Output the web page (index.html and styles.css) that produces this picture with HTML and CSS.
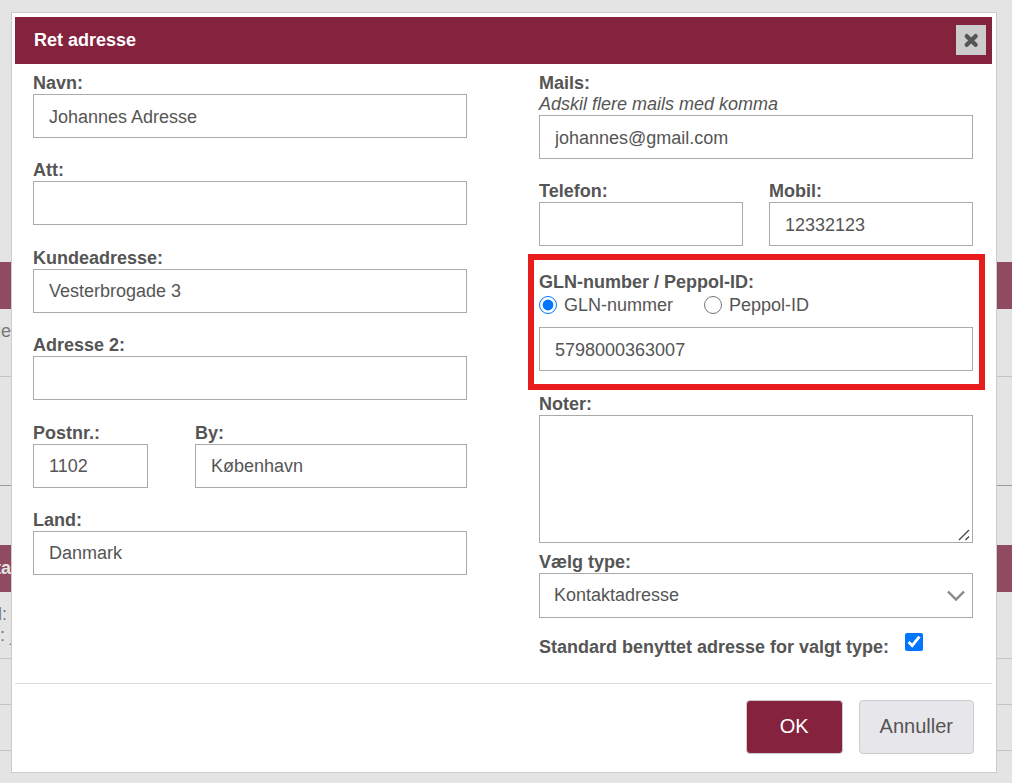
FILE: index.html
```
<!DOCTYPE html>
<html lang="da">
<head>
  <meta charset="UTF-8" />
  <meta name="viewport" content="width=device-width, initial-scale=1.0" />
  <title>Ret adresse</title>
  <link rel="stylesheet" href="styles.css">
</head>
<body>
  <!-- Page behind the dialog -->
  <div class="page" aria-hidden="true">
    <div class="page-top"></div>
    <div class="band"></div>
    <div class="page-row row-first"><span class="cell">ge</span></div>
    <div class="page-row row-dark"></div>
    <div class="page-space"></div>
    <div class="band"><span class="cell">ta</span></div>
    <div class="page-row row-contact">
      <span class="cell short">l:</span>
      <span class="cell long">s: j</span>
    </div>
    <div class="page-row row-small"></div>
    <div class="page-row row-small"></div>
  </div>

  <form class="dialog" role="dialog" aria-labelledby="dialog-title">
    <header class="dialog-header">
      <h1 id="dialog-title">Ret adresse</h1>
      <button type="button" class="close" aria-label="Luk">
        <svg width="16" height="16" viewBox="0 0 16 16">
          <path d="M3.8 4.2 L12.6 12.8 M12.6 4.2 L3.8 12.8" stroke="#555" stroke-width="4.4" stroke-linecap="round" />
        </svg>
      </button>
    </header>

    <div class="dialog-body">
      <div class="column column-address">
        <div class="field">
          <label for="navn">Navn:</label>
          <input type="text" id="navn" value="Johannes Adresse">
        </div>
        <div class="field">
          <label for="att">Att:</label>
          <input type="text" id="att">
        </div>
        <div class="field">
          <label for="adresse">Kundeadresse:</label>
          <input type="text" id="adresse" value="Vesterbrogade 3">
        </div>
        <div class="field">
          <label for="adresse2">Adresse 2:</label>
          <input type="text" id="adresse2">
        </div>
        <div class="field-row city-row">
          <div class="field">
            <label for="postnr">Postnr.:</label>
            <input type="text" id="postnr" value="1102">
          </div>
          <div class="field">
            <label for="by">By:</label>
            <input type="text" id="by" value="København">
          </div>
        </div>
        <div class="field">
          <label for="land">Land:</label>
          <input type="text" id="land" value="Danmark">
        </div>
      </div>

      <div class="column">
        <div class="field">
          <label for="mails">Mails:</label>
          <em class="hint">Adskil flere mails med komma</em>
          <input type="text" id="mails" value="johannes@gmail.com">
        </div>
        <div class="field-row phone-row">
          <div class="field">
            <label for="telefon">Telefon:</label>
            <input type="text" id="telefon">
          </div>
          <div class="field">
            <label for="mobil">Mobil:</label>
            <input type="text" id="mobil" value="12332123">
          </div>
        </div>

        <div class="highlight">
          <label for="gln">GLN-number / Peppol-ID:</label>
          <div class="radios">
            <label><input type="radio" name="idtype" checked>GLN-nummer</label>
            <label><input type="radio" name="idtype">Peppol-ID</label>
          </div>
          <input type="text" id="gln" value="5798000363007">
        </div>

        <div class="field notes">
          <label for="noter">Noter:</label>
          <div class="textarea">
            <textarea id="noter"></textarea>
            <svg width="16" height="16" viewBox="0 0 16 16">
              <path d="M0 0 H16 V16 H0 Z" fill="#fff" />
              <path d="M3 14 L13 4 M9.5 14 L13 10.5" stroke="#444" stroke-width="1.3" />
            </svg>
          </div>
        </div>
        <div class="field type">
          <label for="type">Vælg type:</label>
          <div class="select">
            <select id="type">
              <option>Kontaktadresse</option>
            </select>
            <svg width="20" height="14" viewBox="0 0 20 14">
              <path d="M2 2.5 L10 10.5 L18 2.5" fill="none" stroke="#888" stroke-width="2.4" />
            </svg>
          </div>
        </div>
        <div class="check">
          <label for="standard">Standard benyttet adresse for valgt type:</label>
          <input type="checkbox" id="standard" checked>
        </div>
      </div>
    </div>

    <footer class="dialog-footer">
      <button type="submit" class="btn btn-ok">OK</button>
      <button type="button" class="btn btn-cancel">Annuller</button>
    </footer>
  </form>
</body>
</html>
```
FILE: styles.css
```
* {
  margin: 0;
  padding: 0;
  box-sizing: border-box;
}

body {
  font-family: "Liberation Sans", Arial, sans-serif;
  font-size: 18px;
  line-height: 21px;
  min-height: 100vh;
  background: #e4e4e4;
  color: #555;
  position: relative;
  overflow-x: hidden;
}

/* page behind the dialog */
.page-top {
  height: 262px;
}

.band {
  height: 47px;
  padding: 13px 0;
  background: #914b61;
  color: #e4e4e4;
  font-weight: bold;
}

/* text runs in under the left edge of the dialog */
.cell {
  display: flex;
  justify-content: flex-end;
  width: 11px;
  color: #777;
  white-space: nowrap;
}

.band .cell {
  color: #e4e4e4;
}

.cell.short {
  width: 7px;
}

.cell.long {
  width: 14px;
}

.page-row {
  border-bottom: 1px solid #c4c4c4;
}

.row-first {
  height: 68px;
  padding-top: 12px;
}

.row-dark {
  height: 109px;
  border-color: #999;
}

.page-space {
  height: 59px;
}

.row-contact {
  height: 67px;
  padding-top: 12px;
}

.row-small {
  height: 46px;
}

/* dialog */
.dialog {
  position: absolute;
  top: 12px;
  left: 11px;
  right: 15px;
  padding: 4px 4px 0 3px;
  background: #fff;
  border: 1px solid #ccc;
}

.dialog-header {
  display: flex;
  align-items: center;
  justify-content: space-between;
  height: 47px;
  padding: 0 6px 1px 19px;
  background: #85233f;
  color: #fff;
}

.dialog-header h1 {
  font-size: 18px;
}

.close {
  display: flex;
  align-items: center;
  justify-content: center;
  width: 30px;
  height: 30px;
  background: #ccc;
  border: none;
  cursor: pointer;
}

.dialog-body {
  display: grid;
  grid-template-columns: 1fr 1fr;
  align-items: start;
  gap: 72px;
  padding: 9px 19px 0 18px;
}

.column {
  min-width: 0;
}

.field {
  margin-bottom: 22px;
}

/* address fields share the height evenly */
.column-address {
  display: flex;
  flex-direction: column;
  justify-content: space-between;
  min-height: 502px;
}

.column-address .field {
  margin-bottom: 0;
}

label {
  display: block;
  font-weight: bold;
}

.hint {
  display: block;
}

input[type="text"],
textarea,
select {
  display: block;
  width: 100%;
  height: 44px;
  padding: 2px 15px 0;
  font: inherit;
  color: #555;
  background: #fff;
  border: 1px solid #aaa;
  border-radius: 0;
}

.field-row {
  display: grid;
}

.city-row {
  grid-template-columns: 115px 1fr;
  gap: 47px;
}

.phone-row {
  grid-template-columns: 1fr 1fr;
  gap: 26px;
}

.highlight {
  margin: -14px -12px 4px -11px;
  padding: 12px 6px 13px 5px;
  border: 6px solid #e81c1c;
}

.radios {
  display: flex;
  gap: 31px;
  margin-bottom: 10px;
}

.radios label {
  display: flex;
  align-items: center;
  gap: 7px;
  height: 24px;
  font-weight: normal;
}

input[type="radio"],
input[type="checkbox"] {
  width: 18px;
  height: 18px;
}

.notes {
  margin-bottom: 9px;
}

.textarea,
.select {
  position: relative;
}

textarea {
  height: 128px;
  padding: 10px 15px;
  resize: vertical;
}

.textarea svg {
  position: absolute;
  right: 1px;
  bottom: 1px;
  pointer-events: none;
}

.type {
  margin-bottom: 15px;
}

select {
  height: 45px;
  padding: 0 14px;
  appearance: none;
}

.select svg {
  position: absolute;
  top: 16px;
  right: 7px;
  pointer-events: none;
}

.check {
  display: flex;
  align-items: flex-start;
  gap: 16px;
  margin-bottom: 22px;
  line-height: 28px;
}

.dialog-footer {
  display: flex;
  justify-content: flex-end;
  gap: 16px;
  padding: 16px 18px 18px;
  border-top: 1px solid #ddd;
}

.btn {
  height: 54px;
  padding: 0 20px 2px;
  font-family: inherit;
  font-size: 20px;
  border: 1px solid #ccc;
  border-radius: 4px;
  cursor: pointer;
}

.btn-ok {
  padding: 0 33px 2px;
  background: #85233f;
  color: #fff;
}

.btn-cancel {
  background: #e7e6eb;
  color: #555;
}
```
